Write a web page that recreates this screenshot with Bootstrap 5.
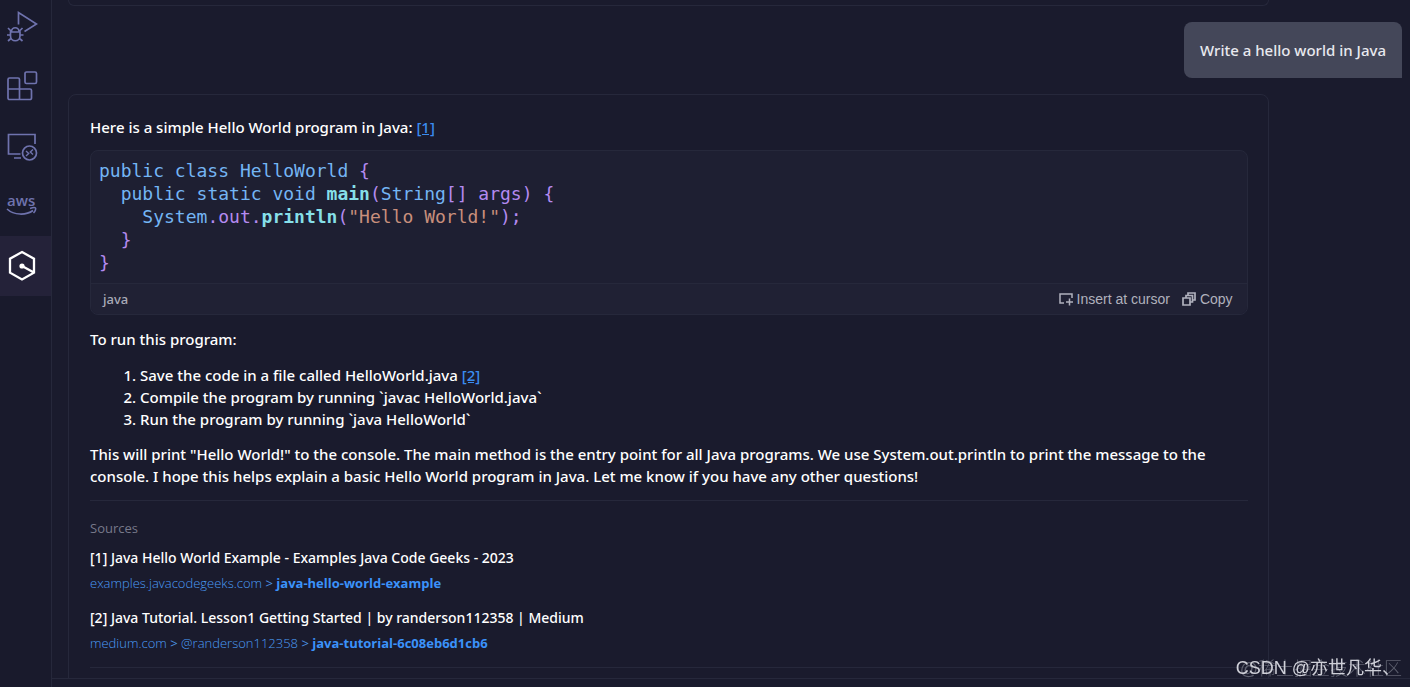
<!DOCTYPE html>
<html lang="en">
<head>
<meta charset="utf-8">
<meta name="viewport" content="width=device-width, initial-scale=1">
<title>Chat</title>
<link href="https://cdn.jsdelivr.net/npm/bootstrap@5.3.0/dist/css/bootstrap.min.css" rel="stylesheet">
<style>
body{background:#1a1b2d;color:#fff;font-family:"Noto Sans","Noto Sans CJK SC",sans-serif;font-size:15px;font-weight:500;line-height:22px}
.line{border-color:#26283b!important}
.activity{width:52px;background:#191a2c}
.activity button{height:60px;color:#6f73ae;background:none;border:0;padding:0 8px 0 0}
.activity button:first-child{height:56px;padding-bottom:4px}
.activity button.active{background:#242239;color:#fff}
.thread{padding:0 8px 0 16px}
.answer{width:90%;border:1px solid #26283b;border-radius:8px;padding:21px 20px 0 21px}
.answer.previous{height:6px;border-top:0;border-radius:0 0 8px 8px;padding:0}
.bubble{background:#444759;color:#e8e9ef;border-radius:8px 8px 0 8px;padding:17px 16px}
.answer a{color:#3b8cf0}
.gap-below{margin-bottom:14px}
.gap-tight{margin-bottom:13px}
.code-box{border:1px solid #26283b;border-radius:8px;background:#1e1f32;margin:12px 0 13px}
.code-box pre{font:18px/23px "DejaVu Sans Mono",monospace;padding:8px 8px 9px;color:#b48af0}
.code-box .ty{color:#74b5f4}
.code-box .fn{color:#86dfe8;font-weight:700}
.code-box .st{color:#c98f7c}
.code-foot{height:31px;background:#202134;border-radius:0 0 8px 8px;color:#a9abb8;padding:0 14px 0 12px;font-size:13px}
.code-foot button{font:14px/20px "Liberation Sans",sans-serif;color:#b0b1bd;background:none;border:0;padding:0}
.steps{padding-left:50px}
.cut{border-top:1px solid #26283b}
.muted{color:#77798a;font:13px/22px "Open Sans",sans-serif}
.source-title{font-size:14px}
.trail{font:13px/20px "Open Sans",sans-serif;margin:4px 0 14px}
.answer .trail a{text-decoration:none;color:#4a9cf5;font-weight:300}
.answer .trail a.leaf{color:#3b92fa;font-weight:700}
.trail span{color:#4a90e0}
.foot{height:9px;border-top:1px solid #26283b}
.wm{font:18px/26px "Liberation Sans","Noto Sans CJK SC",sans-serif;pointer-events:none;white-space:nowrap}
.wm-back{right:8px;bottom:5px;color:#5e606f;font-weight:300}
.wm-front{right:10px;bottom:6px;color:#cfd0d8}
</style>
</head>
<body>
<div class="d-flex vh-100 overflow-hidden">
  <nav class="activity border-end line flex-shrink-0 d-flex flex-column" aria-label="Activity bar">
    <button type="button" aria-label="Run and debug"><svg width="32" height="32" viewBox="0 0 32 32" fill="none" stroke="currentColor" stroke-width="1.7"><path d="M12.500 14.500V2.500L30.500 14 18.500 21.500"/><path d="M4.500 22h9.500v4a4.700 4.700 0 0 1-9.500 0zM5.500 21.500a3.700 3.700 0 0 1 7.500 0M2 18l3 3M16.500 18l-3 3M1 25h3.500M14 25h3.500M2 31l3.500-3M16.500 31l-3.500-3"/></svg></button>
    <button type="button" aria-label="Extensions"><svg width="32" height="32" viewBox="0 0 32 32" fill="none" stroke="currentColor" stroke-width="1.7"><rect x="19" y="2" width="11.500" height="11.500" rx="1.500"/><path d="M13.500 19V9.500A1.500 1.500 0 0 0 12 8H3.500A1.500 1.500 0 0 0 2 9.500V28a1.500 1.500 0 0 0 1.500 1.500H24a1.500 1.500 0 0 0 1.500-1.500v-7.500A1.500 1.500 0 0 0 24 19H2M13.500 19v10.500"/></svg></button>
    <button type="button" aria-label="Remote explorer"><svg width="32" height="32" viewBox="0 0 32 32" fill="none" stroke="currentColor" stroke-width="1.700"><path d="M14.500 24H2.500V4.500h26.500V14M8 28h7"/><circle cx="23.500" cy="23" r="7"/><path d="M20 21l2.700 2.500L20 26M27 19.500L24.300 22 27 24.500" stroke-width="1.400"/></svg></button>
    <button type="button" aria-label="AWS"><svg width="34" height="32" viewBox="0 0 34 32" fill="none" stroke="currentColor" stroke-width="1.600"><text x="2" y="16" font-family="Open Sans" font-size="15" font-weight="600" fill="currentColor" stroke="none">aws</text><path d="M2 19c7 6.500 19 6.500 26 1.500M25 18.500c3-1 5-1 5.500-.5s0 3-2 5"/></svg></button>
    <button type="button" class="active" aria-label="Assistant"><svg width="32" height="32" viewBox="0 0 32 32" fill="none" stroke="currentColor" stroke-width="2.300"><path d="M16 2l12 6.700v14L16 29.500 4 22.700v-14zM16 16l11 6"/><circle cx="16" cy="16" r="2.600" fill="currentColor" stroke="none"/></svg></button>
  </nav>

  <main class="flex-grow-1 d-flex flex-column overflow-hidden">
    <div class="thread flex-grow-1 overflow-hidden d-flex flex-column gap-3">
      <section class="answer previous flex-shrink-0"></section>
      <div class="bubble align-self-end flex-shrink-0">Write a hello world in Java</div>
      <section class="answer flex-shrink-0">
        <p class="mb-0">Here is a simple Hello World program in Java: <a href="#s1">[1]</a></p>
        <div class="code-box">
<pre class="m-0 overflow-hidden"><span class="ty">public class HelloWorld</span> {
  <span class="ty">public static void</span> <span class="fn">main</span>(<span class="ty">String</span>[] args) {
    <span class="ty">System</span>.out.<span class="fn">println</span>(<span class="st">"Hello World!"</span>);
  }
}</pre>
          <div class="code-foot border-top line d-flex align-items-center">
            <span class="me-auto">java</span>
            <button type="button" class="d-flex align-items-center gap-1 me-2"><svg width="14" height="14" viewBox="0 0 14 14" fill="none" stroke="currentColor" stroke-width="1.500"><path d="M5 11H1V2h12v4M7 10h7M10.500 6.500v7"/></svg>Insert at cursor</button>
            <button type="button" class="d-flex align-items-center gap-1 ms-1"><svg width="14" height="14" viewBox="0 0 14 14" fill="none" stroke="currentColor" stroke-width="1.700"><path d="M1 6h7v7H1zM4 6V3.500h6.500V10H8M6 3.500V1h7v7h-2.500"/></svg>Copy</button>
          </div>
        </div>
        <p class="gap-below">To run this program:</p>
        <ol class="steps gap-tight">
          <li>Save the code in a file called HelloWorld.java <a href="#s2">[2]</a></li>
          <li>Compile the program by running `javac HelloWorld.java`</li>
          <li>Run the program by running `java HelloWorld`</li>
        </ol>
        <p class="gap-tight pe-3">This will print "Hello World!" to the console. The main method is the entry point for all Java programs. We use System.out.println to print the message to the console. I hope this helps explain a basic Hello World program in Java. Let me know if you have any other questions!</p>
        <div class="cut pt-3">
          <div class="muted mb-2">Sources</div>
          <div class="source-title" id="s1">[1] Java Hello World Example - Examples Java Code Geeks - 2023</div>
          <div class="trail"><a href="#">examples.javacodegeeks.com</a> <span>&gt;</span> <a class="leaf" href="#">java-hello-world-example</a></div>
          <div class="source-title" id="s2">[2] Java Tutorial. Lesson1 Getting Started | by randerson112358 | Medium</div>
          <div class="trail"><a href="#">medium.com</a> <span>&gt;</span> <a href="#">@randerson112358</a> <span>&gt;</span> <a class="leaf" href="#">java-tutorial-6c08eb6d1cb6</a></div>
        </div>
        <div class="cut pt-5"></div>
      </section>
    </div>
    <div class="foot flex-shrink-0"></div>
  </main>
</div>
<div class="wm wm-back position-fixed">@稀土掘金技术社区</div>
<div class="wm wm-front position-fixed">CSDN @亦世凡华、</div>
</body>
</html>
